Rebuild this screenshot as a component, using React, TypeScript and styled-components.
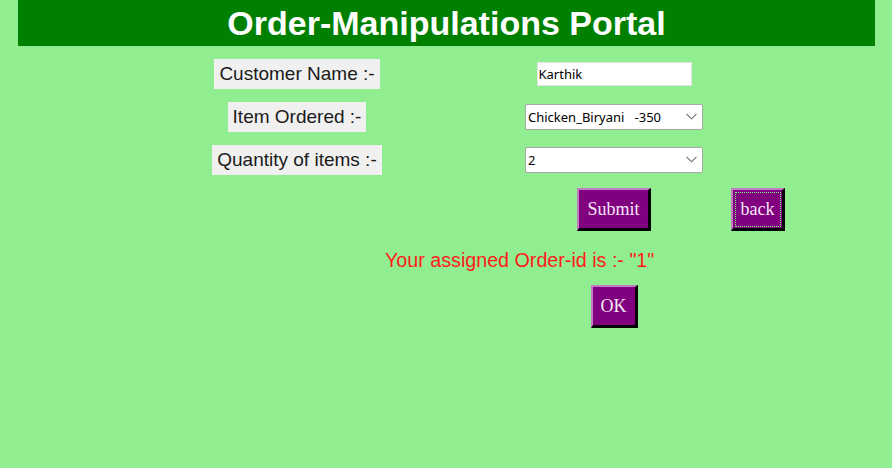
import React from "react";
import styled, { createGlobalStyle } from "styled-components";

const Global = createGlobalStyle`
  html, body { margin: 0; padding: 0; }
  body {
    background: #90ee90;
    font-family: "Liberation Sans", Arial, sans-serif;
    width: 892px;
    height: 468px;
    overflow: hidden;
  }
`;

const Header = styled.h1`
  margin: 0 17px 0 18px;
  height: 46px;
  background: #008000;
  color: #ffffff;
  font-family: "Liberation Sans", Arial, sans-serif;
  font-weight: bold;
  font-size: 34px;
  line-height: 46px;
  text-align: center;
`;

const FormGrid = styled.div`
  display: grid;
  grid-template-columns: 440px 194px 94px;
  row-gap: 13px;
  margin: 13px 0 0 77px;
  align-items: center;
`;

const LabelCell = styled.div`
  display: flex;
  justify-content: center;
  align-items: center;
  height: 30px;
`;

const Label = styled.span`
  background: #f0f0f0;
  color: #1a1a1a;
  font-size: 19px;
  line-height: 30px;
  height: 30px;
  padding: 0 5px;
  font-family: "Liberation Sans", Arial, sans-serif;
`;

const FieldCell = styled.div<{ $col?: number }>`
  display: flex;
  justify-content: center;
  align-items: center;
  grid-column: ${(p) => p.$col ?? 2};
`;

const TextInput = styled.input`
  box-sizing: border-box;
  width: 155px;
  height: 24px;
  border: 1px solid #e3e3e3;
  background: #ffffff;
  font-family: "Noto Sans", "Open Sans", sans-serif;
  font-size: 13px;
  color: #000;
  padding: 0 1px;
  outline: none;
`;

const SelectWrap = styled.div`
  position: relative;
  width: 178px;
  height: 26px;
`;

const Select = styled.select`
  appearance: none;
  -webkit-appearance: none;
  box-sizing: border-box;
  width: 178px;
  height: 26px;
  border: 1px solid #a8a8a8;
  border-radius: 2px;
  background: #ffffff;
  font-family: "Noto Sans", "Open Sans", sans-serif;
  font-size: 13px;
  color: #000;
  padding: 0 20px 0 2px;
  outline: none;
`;

const Chevron = styled.svg`
  position: absolute;
  right: 6px;
  top: 9px;
  pointer-events: none;
`;

const PurpleButton = styled.button<{ $focused?: boolean }>`
  background: #800080;
  color: #f4e8f4;
  font-family: "Liberation Serif", "Times New Roman", serif;
  font-size: 18px;
  height: 43px;
  padding: 0 8px;
  border-style: solid;
  border-width: 2px 3px 3px 2px;
  border-color: #c57ac5 #000000 #000000 #c57ac5;
  cursor: pointer;
  outline: ${(p) => (p.$focused ? "1px dotted #7fff7f" : "none")};
  outline-offset: -5px;
`;

const Message = styled.div`
  margin: 17px 0 0 0;
  padding-left: 385px;
  color: #ff1a1a;
  font-size: 19.7px;
  line-height: 24px;
  font-family: "Liberation Sans", Arial, sans-serif;
`;

const OkRow = styled.div`
  display: grid;
  grid-template-columns: 440px 194px;
  margin: 13px 0 0 77px;
`;

const ChevronIcon = () => (
  <Chevron width="11" height="7" viewBox="0 0 11 7">
    <path d="M0.5 0.8 L5.5 5.8 L10.5 0.8" fill="none" stroke="#6d6d6d" strokeWidth="1.1" />
  </Chevron>
);

export default function App() {
  return (
    <>
      <Global />
      <Header>Order-Manipulations Portal</Header>
      <FormGrid>
        <LabelCell>
          <Label>Customer Name :-</Label>
        </LabelCell>
        <FieldCell>
          <TextInput defaultValue="Karthik" />
        </FieldCell>
        <div />

        <LabelCell>
          <Label>Item Ordered :-</Label>
        </LabelCell>
        <FieldCell>
          <SelectWrap>
            <Select defaultValue="cb">
              <option value="cb">Chicken_Biryani&nbsp;&nbsp; -350</option>
            </Select>
            <ChevronIcon />
          </SelectWrap>
        </FieldCell>
        <div />

        <LabelCell>
          <Label>Quantity of items :-</Label>
        </LabelCell>
        <FieldCell>
          <SelectWrap>
            <Select defaultValue="2">
              <option value="1">1</option>
              <option value="2">2</option>
              <option value="3">3</option>
            </Select>
            <ChevronIcon />
          </SelectWrap>
        </FieldCell>
        <div />

        <div />
        <FieldCell>
          <PurpleButton>Submit</PurpleButton>
        </FieldCell>
        <FieldCell $col={3}>
          <PurpleButton $focused>back</PurpleButton>
        </FieldCell>
      </FormGrid>
      <Message>Your assigned Order-id is :- "1"</Message>
      <OkRow>
        <div />
        <FieldCell>
          <PurpleButton>OK</PurpleButton>
        </FieldCell>
      </OkRow>
    </>
  );
}
